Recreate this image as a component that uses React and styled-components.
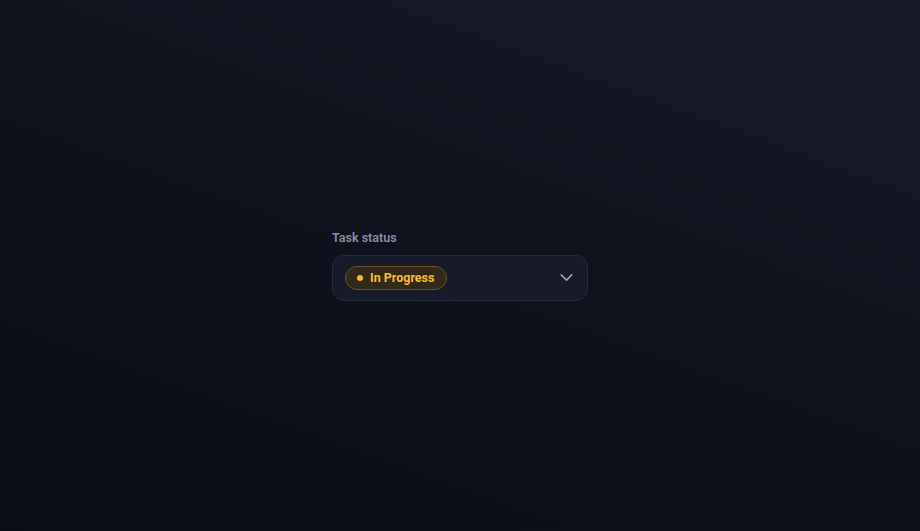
import React from 'react';
import styled, { createGlobalStyle } from 'styled-components';

const GlobalStyle = createGlobalStyle`
  html, body, #root {
    margin: 0;
    height: 100%;
  }
  body {
    font-family: Roboto, "Liberation Sans", sans-serif;
    -webkit-font-smoothing: antialiased;
  }
`;

const Page = styled.div`
  min-height: 100vh;
  display: flex;
  align-items: center;
  justify-content: center;
  background: linear-gradient(200deg, #161a28 0%, #0f121c 50%, #0a0d15 100%);
`;

const Field = styled.div`
  width: 256px;
  display: flex;
  flex-direction: column;
  gap: 10px;
`;

const Label = styled.label`
  font-size: 12.5px;
  font-weight: 600;
  color: #8a8ea6;
  line-height: 14px;
`;

const Trigger = styled.button`
  box-sizing: border-box;
  height: 46px;
  width: 100%;
  display: flex;
  align-items: center;
  justify-content: space-between;
  padding: 0 10px 0 12px;
  background: #171a29;
  border: 1px solid #262a3c;
  border-radius: 12px;
  cursor: pointer;
  font-family: inherit;
`;

const Pill = styled.span`
  box-sizing: border-box;
  height: 24px;
  display: inline-flex;
  align-items: center;
  gap: 7px;
  padding: 0 12px 0 11px;
  border-radius: 999px;
  background: ${(p) => p.$bg};
  border: 1px solid ${(p) => p.$border};
  color: ${(p) => p.$color};
  font-size: 12.5px;
  font-weight: 700;
`;

const Dot = styled.span`
  width: 6px;
  height: 6px;
  border-radius: 50%;
  background: ${(p) => p.$color};
`;

const Chevron = styled.svg`
  width: 21px;
  height: 21px;
  color: #9ea2b8;
`;

export default function App() {
  return (
    <>
      <GlobalStyle />
      <Page>
        <Field>
          <Label>Task status</Label>
          <Trigger>
            <Pill $bg="#33291b" $border="#6a5226" $color="#fbbf24">
              <Dot $color="#fbbf24" />
              In Progress
            </Pill>
            <Chevron viewBox="0 0 24 24" fill="none" stroke="currentColor" strokeWidth="1.8" strokeLinecap="round" strokeLinejoin="round">
              <path d="M6 9l6 6 6-6" />
            </Chevron>
          </Trigger>
        </Field>
      </Page>
    </>
  );
}
